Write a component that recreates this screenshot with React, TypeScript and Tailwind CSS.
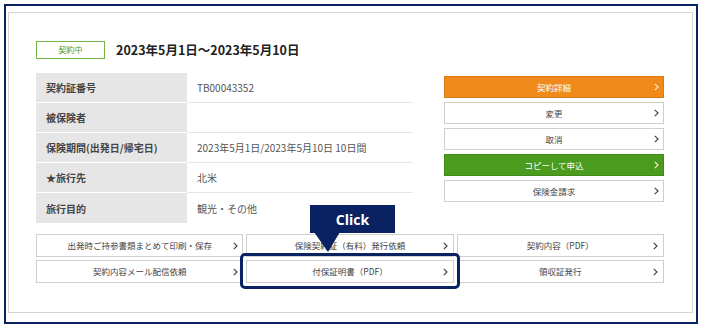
const rows = [
  { label: '契約証番号', value: 'TB00043352' },
  { label: '被保険者', value: '' },
  { label: '保険期間(出発日/帰宅日)', value: '2023年5月1日/2023年5月10日 10日間' },
  { label: '★旅行先', value: '北米' },
  { label: '旅行目的', value: '観光・その他' },
];

const sideButtons = [
  { text: '契約詳細', tone: 'orange' },
  { text: '変更', tone: 'plain' },
  { text: '取消', tone: 'plain' },
  { text: 'コピーして申込', tone: 'green' },
  { text: '保険金請求', tone: 'plain' },
];

const bottomButtons = [
  '出発時ご持参書類まとめて印刷・保存',
  '保険契約証（有料）発行依頼',
  '契約内容（PDF）',
  '契約内容メール配信依頼',
  '付保証明書（PDF）',
  '領収証発行',
];

function Chevron({ light }: { light?: boolean }) {
  return (
    <svg width="5" height="8" viewBox="0 0 5 8" className="shrink-0">
      <polyline points="0.8,0.8 4,4 0.8,7.2" fill="none" stroke={light ? '#ffe6c8' : '#444'} strokeWidth="1.2" />
    </svg>
  );
}

export default function App() {
  return (
    <div className="relative w-[703px] h-[328px] bg-white pt-[4px] pl-[4px] pr-[5px] font-['Noto_Sans_CJK_JP','Noto_Sans',sans-serif]">
      <div className="h-[320px] border-2 border-[#0b2262] pl-[2px] pr-[3px] pt-[6px] pb-[9px]">
        <div className="h-full border border-[#d3d3d3] pt-[28px] pl-[27px] pr-[28px]">
          {/* header */}
          <div className="flex items-center gap-[11px] h-[18px]">
            <div className="w-[69px] h-[18px] border border-[#72b544] flex items-center justify-center text-[8px] text-[#4a9a22]">
              契約中
            </div>
            <div className="text-[12.5px] font-bold text-[#222]">2023年5月1日～2023年5月10日</div>
          </div>

          <div className="mt-[14px] flex gap-[31px]">
            <div className="w-[377px]">
              {rows.map((r, i) => (
                <div key={i} className="flex h-[30px]">
                  <div
                    className={`w-[151px] bg-[#e6e6e6] pl-[10px] flex items-center text-[10px] font-bold text-[#444] ${
                      i < rows.length - 1 ? 'border-b border-white' : ''
                    }`}
                  >
                    {r.label}
                  </div>
                  <div
                    className={`flex-1 pl-[10px] flex items-center text-[10px] text-[#555] ${
                      i < rows.length - 1 ? 'border-b border-[#e6e6e6]' : ''
                    }`}
                  >
                    {r.value}
                  </div>
                </div>
              ))}
            </div>

            <div className="w-[220px] mt-[3px] flex flex-col gap-[4px]">
              {sideButtons.map((b, i) => (
                <div
                  key={i}
                  className={`h-[22px] flex items-center border text-[8.5px] ${
                    b.tone === 'orange'
                      ? 'bg-[#ef8a1b] border-[#d97a12] text-white'
                      : b.tone === 'green'
                      ? 'bg-[#4b9b1e] border-[#428a18] text-white'
                      : 'bg-white border-[#cfcfcf] text-[#444]'
                  }`}
                >
                  <div className="w-[14px]" />
                  <div className="flex-1 text-center">{b.text}</div>
                  <div className="w-[14px] flex justify-center">
                    <Chevron light={b.tone !== 'plain'} />
                  </div>
                </div>
              ))}
            </div>
          </div>

          <div className="mt-[11px] grid grid-cols-3 gap-[3px]">
            {bottomButtons.map((t, i) => (
              <div key={i} className="h-[23px] flex items-center border border-[#cfcfcf] bg-white text-[8.5px] text-[#444]">
                <div className="w-[14px]" />
                <div className="flex-1 text-center">{t}</div>
                <div className="w-[14px] flex justify-center">
                  <Chevron />
                </div>
              </div>
            ))}
          </div>
        </div>
      </div>

      {/* Click callout */}
      <div className="absolute left-[310px] top-[205px] w-[85px] h-[28px] bg-[#0b2262] flex items-center justify-center text-white text-[14px] font-bold font-['Open_Sans',sans-serif]">
        Click
      </div>
      <svg className="absolute left-[310px] top-[232px]" width="40" height="22" viewBox="0 0 40 22">
        <polygon points="4,0 30,0 18,20" fill="#0b2262" />
      </svg>
      <div className="absolute left-[240px] top-[253px] w-[220px] h-[36px] border-[3px] border-[#0b2262] rounded-[5px]" />
    </div>
  );
}
